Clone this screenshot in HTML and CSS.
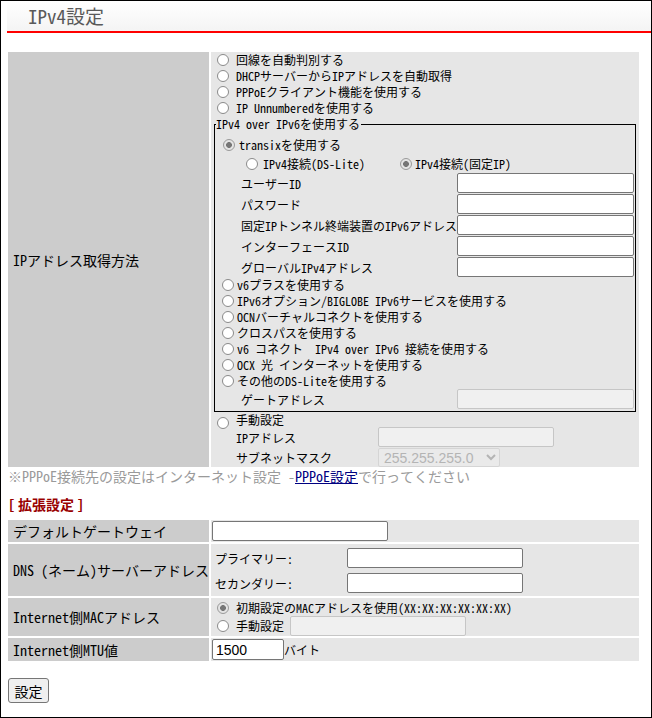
FILE: index.html
```html
<!DOCTYPE html>
<html lang="ja">
<head>
<meta charset="utf-8">
<title>IPv4設定</title>
<link rel="stylesheet" href="styles.css">
</head>
<body>
<div class="frame">
  <div class="header"><h1 class="title">IPv4設定</h1></div>
  <div class="content">
    <div class="form-grid">
      <div class="label-cell">IPアドレス取得方法</div>
      <div class="value-cell main-cell">
        <label class="opt"><input type="radio" name="mode" class="radio">回線を自動判別する</label>
        <label class="opt"><input type="radio" name="mode" class="radio">DHCPサーバーからIPアドレスを自動取得</label>
        <label class="opt"><input type="radio" name="mode" class="radio">PPPoEクライアント機能を使用する</label>
        <label class="opt"><input type="radio" name="mode" class="radio">IP Unnumberedを使用する</label>
        <fieldset class="v6box">
          <legend class="v6legend">IPv4 over IPv6を使用する</legend>
          <label class="opt opt-transix"><input type="radio" name="mode" class="radio" checked>transixを使用する</label>
          <div class="subopts">
            <label class="subopt subopt-ds"><input type="radio" name="tx" class="radio">IPv4接続(DS-Lite)</label>
            <label class="subopt subopt-fixed"><input type="radio" name="tx" class="radio" checked>IPv4接続(固定IP)</label>
          </div>
          <div class="kv kv-tunnel">
            <span class="kv-label">ユーザーID</span><input type="text" class="text-input">
            <span class="kv-label">パスワード</span><input type="text" class="text-input">
            <span class="kv-label">固定IPトンネル終端装置のIPv6アドレス</span><input type="text" class="text-input">
            <span class="kv-label">インターフェースID</span><input type="text" class="text-input">
            <span class="kv-label">グローバルIPv4アドレス</span><input type="text" class="text-input">
          </div>
          <label class="opt opt-inner"><input type="radio" name="mode" class="radio">v6プラスを使用する</label>
          <label class="opt opt-inner"><input type="radio" name="mode" class="radio">IPv6オプション/BIGLOBE IPv6サービスを使用する</label>
          <label class="opt opt-inner"><input type="radio" name="mode" class="radio">OCNバーチャルコネクトを使用する</label>
          <label class="opt opt-inner"><input type="radio" name="mode" class="radio">クロスパスを使用する</label>
          <label class="opt opt-inner"><input type="radio" name="mode" class="radio">v6 コネクト&nbsp; IPv4 over IPv6 接続を使用する</label>
          <label class="opt opt-inner"><input type="radio" name="mode" class="radio">OCX 光 インターネットを使用する</label>
          <label class="opt opt-inner"><input type="radio" name="mode" class="radio">その他のDS-Liteを使用する</label>
          <div class="kv kv-gate">
            <span class="kv-label">ゲートアドレス</span><input type="text" class="text-input" disabled>
          </div>
        </fieldset>
        <label class="opt opt-manual"><input type="radio" name="mode" class="radio">手動設定</label>
        <div class="kv kv-manual">
          <span class="kv-label">IPアドレス</span><input type="text" class="text-input" disabled>
          <span class="kv-label">サブネットマスク</span>
          <select class="mask-select" disabled><option>255.255.255.0</option></select>
        </div>
      </div>
    </div>

    <p class="note">※PPPoE接続先の設定はインターネット設定 -<a href="#" class="note-link">PPPoE設定</a>で行ってください</p>

    <h2 class="section-title"><span class="br-open">[</span>拡張設定<span class="br-close">]</span></h2>

    <div class="form-grid ext-grid">
      <div class="label-cell row-gw">デフォルトゲートウェイ</div>
      <div class="value-cell row-gw"><input type="text" class="text-input gw-input"></div>

      <div class="label-cell row-dns">DNS (ネーム)サーバーアドレス</div>
      <div class="value-cell row-dns">
        <div class="dns-grid">
          <span class="kv-label">プライマリー:</span><input type="text" class="text-input">
          <span class="kv-label">セカンダリー:</span><input type="text" class="text-input">
        </div>
      </div>

      <div class="label-cell row-mac">Internet側MACアドレス</div>
      <div class="value-cell row-mac">
        <label class="opt"><input type="radio" name="mac" class="radio" checked>初期設定のMACアドレスを使用(XX:XX:XX:XX:XX:XX)</label>
        <div class="opt opt-macmanual"><input type="radio" name="mac" class="radio"><span class="mac-label">手動設定</span><input type="text" class="text-input mac-input" disabled></div>
      </div>

      <div class="label-cell row-mtu">Internet側MTU値</div>
      <div class="value-cell row-mtu"><input type="text" class="text-input mtu-input" value="1500"><span class="unit">バイト</span></div>
    </div>

    <button type="button" class="submit-btn">設定</button>
  </div>
</div>
</body>
</html>
```

FILE: styles.css
```css
html, body {
  margin: 0;
  padding: 0;
  background: #fff;
}

body {
  font-family: "Noto Sans Mono CJK JP", "Noto Sans CJK JP", monospace;
  font-size: 12px;
  color: #000;
}

.frame {
  width: 652px;
  height: 718px;
  box-sizing: border-box;
  border: 1px solid #000;
  overflow: hidden;
}

.header {
  margin-left: 6px;
  height: 30px;
  border-bottom: 2px solid #ff0000;
  background: linear-gradient(#ffffff, #f4f4f4);
  display: flex;
  align-items: center;
}

.title {
  margin: 0 0 0 21px;
  font-size: 19px;
  font-weight: normal;
  line-height: 22px;
  color: #5a5a5a;
}

.content {
  padding-left: 7px;
}

.form-grid {
  display: grid;
  grid-template-columns: 201px 428px;
  gap: 2px;
  margin-top: 19px;
}

.label-cell {
  background: #cccccc;
  font-size: 14px;
  line-height: 16px;
  padding-left: 5px;
  display: flex;
  align-items: center;
  white-space: nowrap;
}

.value-cell {
  background: #e6e6e6;
}

.opt {
  display: flex;
  align-items: center;
  height: 16px;
  line-height: 16px;
  white-space: pre;
}

.radio {
  appearance: none;
  -webkit-appearance: none;
  width: 12px;
  height: 12px;
  margin: 0 7px 0 6px;
  box-sizing: border-box;
  border: 1px solid #8a8a8a;
  border-radius: 50%;
  background: #fff;
  flex: none;
}

.radio:checked {
  border-color: #9a9a9a;
  background: radial-gradient(circle, #767676 0 2.6px, #e4e4e4 3.2px);
}

.v6box {
  margin: 0 3px;
  padding: 0 0 2px 0;
  border: 1px solid #000;
  min-width: 0;
}

.v6legend {
  padding: 0 1px 0 0;
  margin-left: 1px;
  line-height: 16px;
  height: 16px;
}

.opt-transix {
  margin-top: 5px;
}

.opt-transix .radio {
  margin: 0 4px 0 8px;
}

.subopts {
  display: flex;
  height: 16px;
  margin-top: 3px;
  line-height: 16px;
}

.subopt {
  display: flex;
  align-items: center;
}

.subopt-ds {
  width: 154px;
  margin-left: 31px;
}

.subopt-ds .radio {
  margin: 0 5px 0 0;
}

.subopt-fixed .radio {
  margin: 0 3px 0 0;
}

.kv {
  display: grid;
  align-items: center;
  row-gap: 1px;
  white-space: nowrap;
}

.kv-tunnel,
.kv-gate {
  grid-template-columns: 216px 177px;
  grid-auto-rows: 20px;
  margin-left: 26px;
}

.kv-tunnel {
  margin-top: 1px;
}

.opt-inner .radio {
  margin: 0 3px 0 7px;
}

.text-input {
  box-sizing: border-box;
  height: 20px;
  width: 177px;
  margin: 0;
  padding: 1px 3px;
  border: 1px solid #767676;
  border-radius: 2px;
  background: #fff;
  font-family: "Liberation Sans", Arial, sans-serif;
  font-size: 14px;
  color: #000;
}

.text-input:disabled {
  background: #f0f0f0;
  border-color: #c6c6c6;
}

.opt-manual {
  height: 15px;
}

.opt-manual .radio {
  margin-top: 6px;
}

.kv-manual {
  grid-template-columns: 142px 176px;
  grid-template-rows: 20px 19px;
  margin-left: 25px;
}

.kv-manual .text-input {
  width: 176px;
}

.mask-select {
  box-sizing: border-box;
  width: 122px;
  height: 19px;
  margin: 0;
  padding: 0 0 0 1px;
  font-family: "Liberation Sans", Arial, sans-serif;
  font-size: 14px;
  color: #a0a0a0;
  background: #ececec;
  border: 1px solid #cfcfcf;
  border-radius: 2px;
}

.note {
  margin: 1px 0 0 0;
  font-size: 14px;
  line-height: 16px;
  color: #9a9a9a;
  white-space: nowrap;
}

.note-link {
  color: #000080;
  text-decoration: underline;
}

.section-title {
  margin: 12px 0 0 0;
  font-size: 14px;
  line-height: 16px;
  font-weight: bold;
  color: #990000;
}

.br-open {
  margin-right: 3px;
}

.br-close {
  margin-left: 3px;
}

.ext-grid {
  margin-top: 8px;
  grid-template-rows: 22px 52px 38px 23px;
}

.row-gw.value-cell {
  display: flex;
  align-items: center;
}

.gw-input {
  width: 176px;
  margin-left: 1px;
}

.dns-grid {
  display: grid;
  grid-template-columns: 132px 176px;
  grid-auto-rows: 20px;
  row-gap: 5px;
  align-items: center;
  padding: 4px 0 3px 4px;
}

.dns-grid .text-input {
  width: 176px;
}

.row-mac.value-cell {
  padding-top: 2px;
  box-sizing: border-box;
}

.opt-macmanual {
  height: 20px;
}

.mac-label {
  width: 54px;
}

.mac-input {
  width: 176px;
}

.row-mtu.value-cell {
  display: flex;
  align-items: flex-start;
}

.mtu-input {
  width: 72px;
  height: 21px;
  margin: 1px 0 0 1px;
  padding: 1px 3px 0 3px;
}

.unit {
  line-height: 23px;
}

.submit-btn {
  display: block;
  margin-top: 17px;
  width: 41px;
  height: 25px;
  padding: 0;
  font-family: "Noto Sans Mono CJK JP", "Noto Sans CJK JP", sans-serif;
  font-size: 14px;
  color: #000;
  background: #efefef;
  border: 1px solid #767676;
  border-radius: 3px;
}
```
